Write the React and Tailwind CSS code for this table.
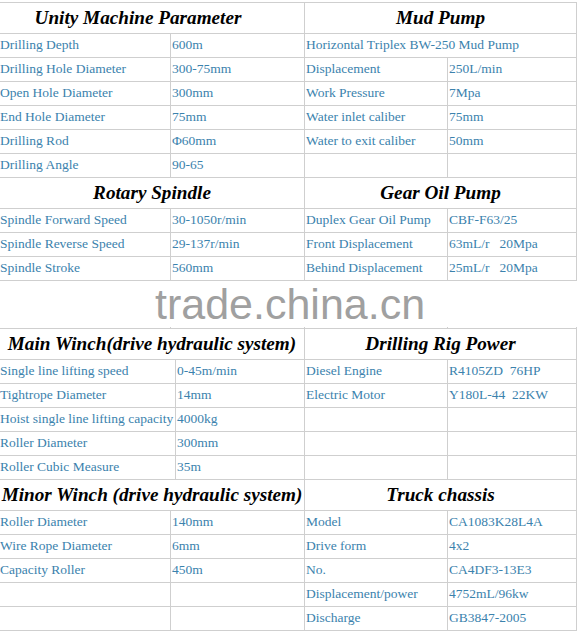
import React from 'react';

const serif = { fontFamily: '"Liberation Serif", "Times New Roman", serif' };

// each band: a left table and a right table sharing the same row grid
const bands = [
  {
    left: {
      title: 'Unity Machine Parameter',
      titlePad: 'pr-[28px]',
      labelW: 'w-[171px]',
      rows: [
        ['Drilling Depth', '600m'],
        ['Drilling Hole Diameter', '300-75mm'],
        ['Open Hole Diameter', '300mm'],
        ['End Hole Diameter', '75mm'],
        ['Drilling Rod', 'Φ60mm'],
        ['Drilling Angle', '90-65'],
      ],
    },
    right: {
      title: 'Mud Pump',
      rows: [
        { span: 'Horizontal Triplex BW-250 Mud Pump' },
        ['Displacement', '250L/min'],
        ['Work Pressure', '7Mpa'],
        ['Water inlet caliber', '75mm'],
        ['Water to exit caliber', '50mm'],
        ['', ''],
      ],
    },
  },
  {
    left: {
      title: 'Rotary Spindle',
      labelW: 'w-[171px]',
      rows: [
        ['Spindle Forward Speed', '30-1050r/min'],
        ['Spindle Reverse Speed', '29-137r/min'],
        ['Spindle Stroke', '560mm'],
        ['', ''],
        ['', ''],
      ],
    },
    right: {
      title: 'Gear Oil Pump',
      rows: [
        ['Duplex Gear Oil Pump', 'CBF-F63/25'],
        ['Front Displacement', '63mL/r\u00a0\u00a0\u00a020Mpa'],
        ['Behind Displacement', '25mL/r\u00a0\u00a0\u00a020Mpa'],
        ['', ''],
        ['', ''],
      ],
    },
  },
  {
    left: {
      title: 'Main Winch(drive hydraulic system)',
      labelW: 'w-[176px]',
      rows: [
        ['Single line lifting speed', '0-45m/min'],
        ['Tightrope Diameter', '14mm'],
        ['Hoist single line lifting capacity', '4000kg'],
        ['Roller Diameter', '300mm'],
        ['Roller Cubic Measure', '35m'],
      ],
    },
    right: {
      title: 'Drilling Rig Power',
      rows: [
        ['Diesel Engine', 'R4105ZD\u00a0\u00a076HP'],
        ['Electric Motor', 'Y180L-44\u00a0\u00a022KW'],
        ['', ''],
        ['', ''],
        ['', ''],
      ],
    },
  },
  {
    left: {
      title: 'Minor Winch (drive hydraulic system)',
      labelW: 'w-[171px]',
      rows: [
        ['Roller Diameter', '140mm'],
        ['Wire Rope Diameter', '6mm'],
        ['Capacity Roller', '450m'],
        ['', ''],
        ['', ''],
      ],
    },
    right: {
      title: 'Truck chassis',
      rows: [
        ['Model', 'CA1083K28L4A'],
        ['Drive form', '4x2'],
        ['No.', 'CA4DF3-13E3'],
        ['Displacement/power', '4752mL/96kw'],
        ['Discharge', 'GB3847-2005'],
      ],
    },
  },
];

function SpecTable({ table, className, labelW }) {
  return (
    <div className={`flex flex-col border-r border-[#cfcfcf] ${className}`}>
      <div
        className={`h-[31px] border-b border-[#cfcfcf] flex items-center justify-center font-bold italic text-[19.2px] text-black whitespace-nowrap ${table.titlePad || ''}`}
      >
        {table.title}
      </div>
      {table.rows.map((row, i) =>
        row.span ? (
          <div key={i} className="h-[24px] border-b border-[#cfcfcf] flex items-center pl-[1px] text-[13.5px] text-[#3b82ad] whitespace-nowrap">
            {row.span}
          </div>
        ) : (
          <div key={i} className="h-[24px] border-b border-[#cfcfcf] flex text-[13.5px] text-[#3b82ad] whitespace-nowrap">
            <div className={`${labelW} shrink-0 border-r border-[#cfcfcf] flex items-center pl-[1px]`}>{row[0]}</div>
            <div className="flex-1 flex items-center pl-[1px]">{row[1]}</div>
          </div>
        )
      )}
    </div>
  );
}

export default function App() {
  return (
    <div className="relative w-[579px] h-[634px] bg-white overflow-hidden" style={serif}>
      <div className="pt-[2px]">
        <div className="w-[577px] border-t border-[#cfcfcf]">
          {bands.map((band, i) => (
            <div key={i} className="flex">
              <SpecTable table={band.left} className="w-[305px] [&>div:not(:first-child)>div:first-child]:pl-0" labelW={band.left.labelW} />
              <SpecTable table={band.right} className="w-[272px]" labelW="w-[143px]" />
            </div>
          ))}
        </div>
      </div>

      {/* watermark over the spindle / gear oil pump rows */}
      <div className="absolute left-0 top-[281px] w-[577px] h-[46px] bg-white flex items-center">
        <span
          className="pl-[155px] text-[43px] leading-[44px] text-[#a0a0a0]"
          style={{ fontFamily: '"Liberation Sans", Arial, sans-serif' }}
        >
          trade.china.cn
        </span>
      </div>
    </div>
  );
}
